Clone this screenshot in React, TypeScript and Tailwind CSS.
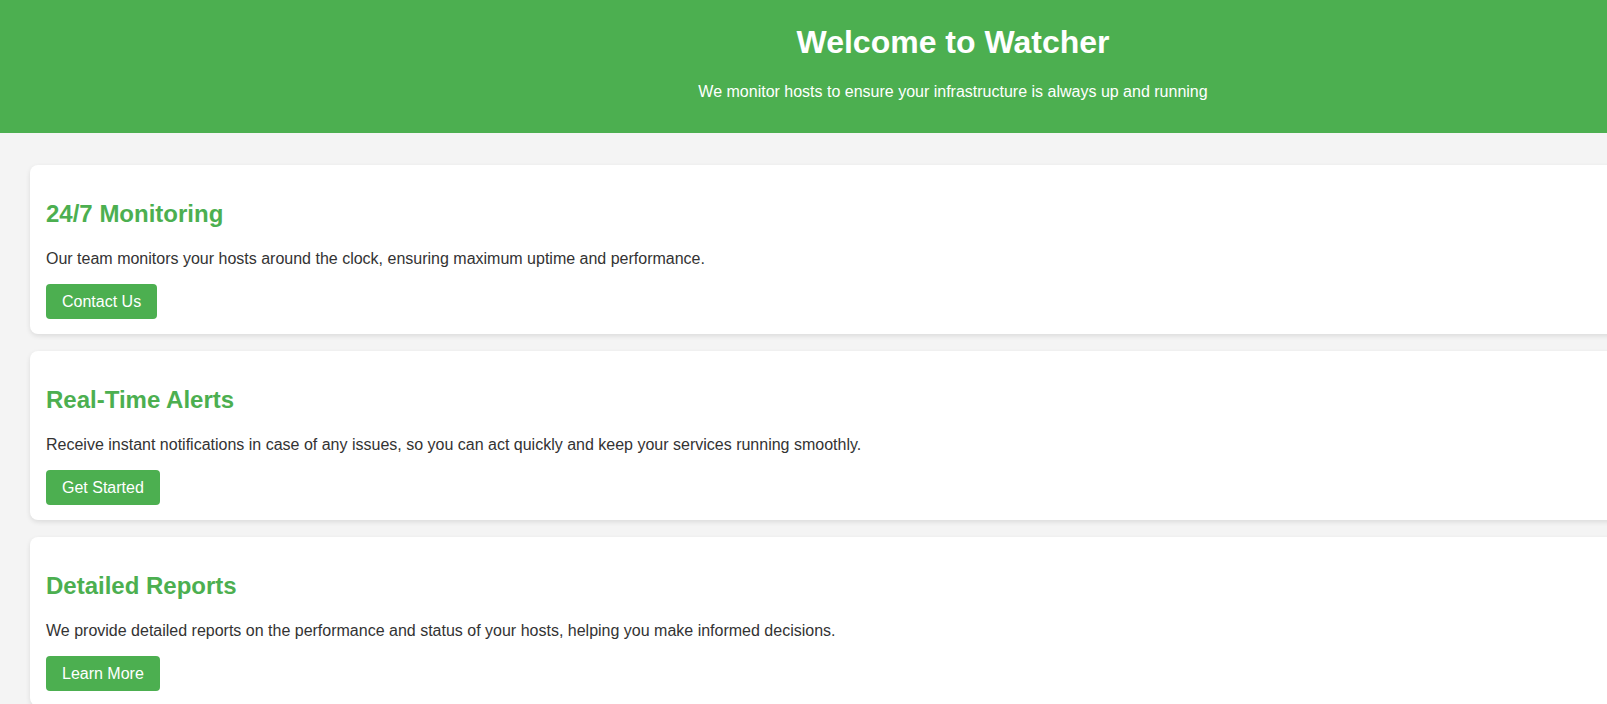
import * as React from "react";

type Feature = {
  title: string;
  text: string;
  action: string;
};

const features: Feature[] = [
  {
    title: "24/7 Monitoring",
    text: "Our team monitors your hosts around the clock, ensuring maximum uptime and performance.",
    action: "Contact Us"
  },
  {
    title: "Real-Time Alerts",
    text: "Receive instant notifications in case of any issues, so you can act quickly and keep your services running smoothly.",
    action: "Get Started"
  },
  {
    title: "Detailed Reports",
    text: "We provide detailed reports on the performance and status of your hosts, helping you make informed decisions.",
    action: "Learn More"
  }
];

function FeatureCard({ title, text, action }: Feature) {
  return (
    <section className="rounded-[8px] bg-white px-[16px] pt-[35px] pb-[15px] shadow-[0_2px_5px_rgba(0,0,0,0.1)]">
      <h2 className="text-[24px] leading-[28px] font-bold text-[#4caf50]">{title}</h2>
      <p className="mt-[22px] text-[16px] leading-[18px] text-[#333333]">{text}</p>
      <a
        href="#"
        className="mt-[16px] inline-flex h-[35px] items-center rounded-[4px] bg-[#4caf50] px-[16px] text-[16px] leading-[18px] text-white"
      >
        {action}
      </a>
    </section>
  );
}

export default function App() {
  return (
    <div
      className="min-h-screen w-[1906px] bg-[#f4f4f4]"
      style={{ fontFamily: '"Liberation Sans", Arial, sans-serif' }}
    >
      <header className="bg-[#4caf50] pt-[24px] pb-[32px] text-center text-white">
        <h1 className="text-[32px] leading-[37px] font-bold">Welcome to Watcher</h1>
        <p className="mt-[22px] text-[16px] leading-[18px]">
          We monitor hosts to ensure your infrastructure is always up and running
        </p>
      </header>

      <main className="flex flex-col gap-[17px] px-[30px] pt-[32px] pb-[30px]">
        {features.map((f) => (
          <FeatureCard key={f.title} {...f} />
        ))}
      </main>
    </div>
  );
}
